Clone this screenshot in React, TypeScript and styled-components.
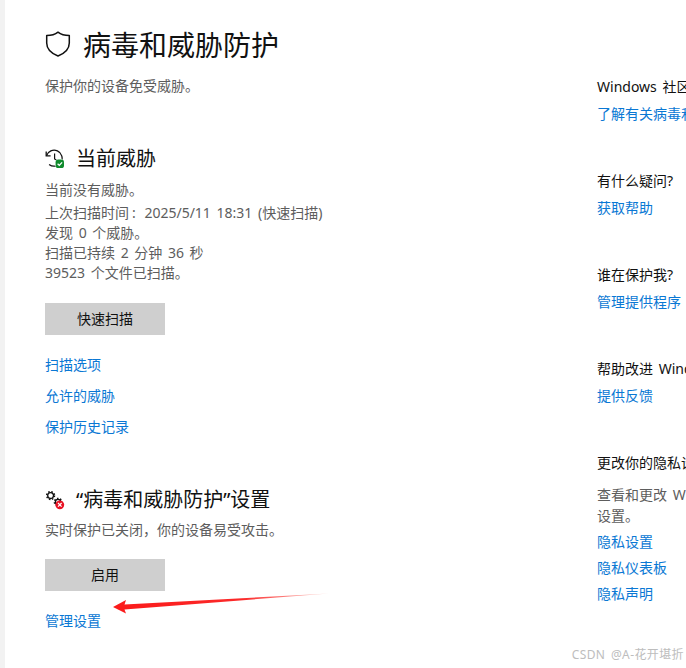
import React from "react";
import styled, { createGlobalStyle } from "styled-components";

const GlobalStyle = createGlobalStyle`
  html, body {
    margin: 0;
    padding: 0;
    background: #fff;
  }
  body {
    font-family: "Noto Sans", "Noto Sans CJK SC", sans-serif;
    word-spacing: 2px;
  }
`;

const ShieldIcon = () => (
  <svg width="26" height="26" viewBox="0 0 26 26" fill="none">
    <path
      d="M13 1.2C10 3.6 6 4.6 1.7 4.6V12c0 6 4.2 10.2 11.3 13 7.1-2.8 11.3-7 11.3-13V4.6C20 4.6 16 3.6 13 1.2z"
      stroke="#111"
      strokeWidth="1.5"
      strokeLinejoin="round"
    />
  </svg>
);

const HistoryIcon = () => (
  <svg width="20" height="20" viewBox="0 0 20 20" fill="none">
    <path
      d="M2.2 5.2A8 8 0 1 1 3 14.2"
      stroke="#111"
      strokeWidth="1.3"
      transform="rotate(-12 9.5 9.5)"
    />
    <path d="M1.2 2.4v4.4h4.4" stroke="#111" strokeWidth="1.3" />
    <path d="M9.6 4.5v5.4l3 1.8" stroke="#111" strokeWidth="1.2" />
    <circle cx="14.5" cy="14.5" r="5" fill="#fff" />
    <rect x="10.6" y="10.6" width="8.4" height="8.4" rx="2.6" fill="#0f8a2c" />
    <path d="M12.6 14.8l1.7 1.6 2.8-3" stroke="#fff" strokeWidth="1.3" />
  </svg>
);

const Gear = ({ cx, cy, r }: { cx: number; cy: number; r: number }) => (
  <g>
    <circle cx={cx} cy={cy} r={r} stroke="#111" strokeWidth="1.3" fill="#fff" />
    <circle
      cx={cx}
      cy={cy}
      r={r + 1}
      stroke="#111"
      strokeWidth="1.5"
      strokeDasharray="1.5 1.6"
      fill="none"
    />
  </g>
);

const GearsIcon = () => (
  <svg width="20" height="20" viewBox="0 0 20 20" fill="none">
    <Gear cx={5.6} cy={5.6} r={2.9} />
    <Gear cx={13} cy={12} r={2.6} />
    <circle cx="14.8" cy="14.8" r="4.4" fill="#e81123" />
    <path d="M13 13l3.6 3.6M16.6 13L13 16.6" stroke="#fff" strokeWidth="1.2" />
  </svg>
);

const App = () => (
  <Page>
    <GlobalStyle />
    <Strip />
    <Main>
      <TitleRow>
        <ShieldIcon />
        <Title>病毒和威胁防护</Title>
      </TitleRow>
      <Subtitle>保护你的设备免受威胁。</Subtitle>

      <ThreatHead>
        <HistoryIcon />
        <SectionTitle>当前威胁</SectionTitle>
      </ThreatHead>
      <StatusLine>当前没有威胁。</StatusLine>
      <Details>
        <div>
          上次扫描时间<Colon>:</Colon> 2025/5/11 18:31 (快速扫描)
        </div>
        <div>发现 0 个威胁。</div>
        <div>扫描已持续 2 分钟 36 秒</div>
        <div>39523 个文件已扫描。</div>
      </Details>
      <ScanButton>快速扫描</ScanButton>
      <LinkList>
        <Link>扫描选项</Link>
        <Link>允许的威胁</Link>
        <Link>保护历史记录</Link>
      </LinkList>

      <SettingsHead>
        <GearsIcon />
        <SectionTitle>“病毒和威胁防护”设置</SectionTitle>
      </SettingsHead>
      <Warning>实时保护已关闭，你的设备易受攻击。</Warning>
      <EnableButton>启用</EnableButton>
      <ManageLink>管理设置</ManageLink>
    </Main>

    <Side>
      <SideBlock>
        <SideTitle>Windows 社区视频</SideTitle>
        <Link>了解有关病毒和威胁防护的详细信息</Link>
      </SideBlock>
      <SideBlock>
        <SideTitle>有什么疑问?</SideTitle>
        <Link>获取帮助</Link>
      </SideBlock>
      <SideBlock>
        <SideTitle>谁在保护我?</SideTitle>
        <Link>管理提供程序</Link>
      </SideBlock>
      <SideBlock>
        <SideTitle>帮助改进 Windows 安全中心</SideTitle>
        <Link>提供反馈</Link>
      </SideBlock>
      <SideBlock>
        <SideTitle>更改你的隐私设置</SideTitle>
        <SideText>
          查看和更改 Windows 10 设备的隐私
          <br />
          设置。
        </SideText>
        <PrivacyLinks>
          <Link>隐私设置</Link>
          <Link>隐私仪表板</Link>
          <Link>隐私声明</Link>
        </PrivacyLinks>
      </SideBlock>
    </Side>

    <Arrow width="222" height="24" viewBox="0 0 222 24">
      <defs>
        <linearGradient id="arrowFade" x1="0" x2="1" y1="0" y2="0">
          <stop offset="0" stopColor="#fb1a1a" />
          <stop offset="0.6" stopColor="#fb2a2a" />
          <stop offset="1" stopColor="#fdd5d0" />
        </linearGradient>
      </defs>
      <path
        d="M0 15L13 8L11.5 12.5L216 1.5L11.5 17.5L13 21.5z"
        fill="url(#arrowFade)"
      />
    </Arrow>
    <Watermark>CSDN @A-花开堪折</Watermark>
  </Page>
);

export default App;

const Page = styled.div`
  position: relative;
  display: flex;
  width: 686px;
  height: 668px;
  overflow: hidden;
  background: #fff;
`;

const Strip = styled.div`
  flex: none;
  width: 5px;
  background: #f2f2f2;
`;

const Main = styled.div`
  flex: none;
  width: 592px;
  padding: 29px 0 0 40px;
  box-sizing: border-box;
  color: #5d5d5d;
  font-size: 14px;
`;

const TitleRow = styled.div`
  display: flex;
  align-items: flex-start;
  gap: 12px;
  height: 32px;
  color: #111;

  svg {
    margin-top: 2px;
  }
`;

const Title = styled.h1`
  margin: 0;
  font-size: 28px;
  font-weight: 400;
  line-height: 32px;
`;

const Subtitle = styled.div`
  margin-top: 14px;
  line-height: 22px;
`;

const SectionHead = styled.div`
  display: flex;
  align-items: center;
  gap: 11px;
  height: 28px;
  color: #111;
`;

const ThreatHead = styled(SectionHead)`
  margin-top: 48px;
`;

const SettingsHead = styled(SectionHead)`
  margin-top: 49px;
`;

const SectionTitle = styled.h2`
  margin: 0;
  font-size: 20px;
  font-weight: 400;
  line-height: 28px;
`;

const StatusLine = styled.div`
  margin-top: 7px;
  line-height: 20px;
`;

const Details = styled.div`
  margin-top: 3px;
  line-height: 20px;
`;

const Colon = styled.span`
  margin: 0 3px;
`;

const GreyButton = styled.div`
  display: flex;
  align-items: center;
  justify-content: center;
  width: 120px;
  height: 32px;
  padding-bottom: 2px;
  box-sizing: border-box;
  background: #cfcfcf;
  color: #111;
  font-size: 14px;
`;

const ScanButton = styled(GreyButton)`
  margin-top: 20px;
`;

const EnableButton = styled(GreyButton)`
  margin-top: 19px;
`;

const Link = styled.div`
  color: #0a78d4;
  font-size: 14px;
  line-height: 20px;
  white-space: nowrap;
`;

const LinkList = styled.div`
  display: flex;
  flex-direction: column;
  gap: 11px;
  margin-top: 20px;
`;

const ManageLink = styled(Link)`
  margin-top: 20px;
`;

const Warning = styled.div`
  margin-top: 6px;
  line-height: 20px;
`;

const Side = styled.div`
  flex: none;
  display: flex;
  flex-direction: column;
  gap: 47px;
  width: 300px;
  padding-top: 77px;
  box-sizing: border-box;
  font-size: 14px;
  white-space: nowrap;
`;

const SideBlock = styled.div`
  display: flex;
  flex-direction: column;
  gap: 7px;
`;

const SideTitle = styled.div`
  color: #111;
  line-height: 20px;
`;

const SideText = styled.div`
  color: #5d5d5d;
  line-height: 21px;
  margin-top: 4px;
`;

const PrivacyLinks = styled.div`
  display: flex;
  flex-direction: column;
  gap: 6px;
  margin-top: -1px;
`;

const Arrow = styled.svg`
  position: absolute;
  left: 113px;
  top: 592px;
`;

const Watermark = styled.div`
  position: absolute;
  right: 2px;
  bottom: 5px;
  color: #bdbdbd;
  font-size: 12px;
  letter-spacing: 0.4px;
  line-height: 16px;
  white-space: nowrap;
`;
